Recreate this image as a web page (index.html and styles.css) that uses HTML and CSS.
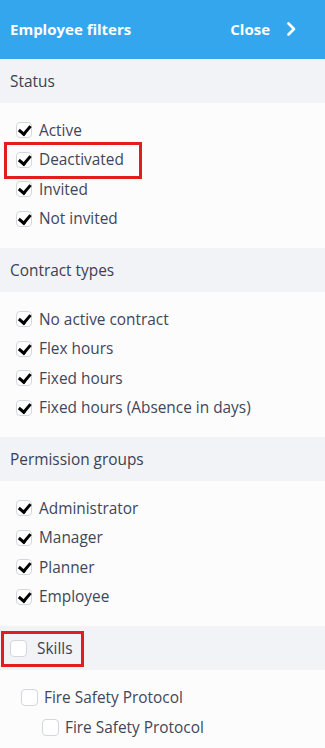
FILE: index.html
```html
<!DOCTYPE html>
<html lang="en">
  <head>
    <meta charset="UTF-8" />
    <meta name="viewport" content="width=device-width, initial-scale=1.0" />
    <title>Employee filters</title>
    <link rel="stylesheet" href="styles.css">
  </head>
  <body>
    <div class="panel">
      <div class="panel-header">
        <span class="panel-title">Employee filters</span>
        <span class="close">
          Close
          <svg width="10" height="14" viewBox="0 0 10 14">
            <polyline points="2.5,1.5 8,7 2.5,12.5" fill="none" stroke="#fff" stroke-width="2.6" stroke-linecap="round" stroke-linejoin="round" />
          </svg>
        </span>
      </div>

      <div class="section-head">Status</div>
      <div class="options">
        <label class="option"><span class="box checked"></span>Active</label>
        <label class="option"><span class="marked"><span class="box checked"></span>Deactivated</span></label>
        <label class="option"><span class="box checked"></span>Invited</label>
        <label class="option"><span class="box checked"></span>Not invited</label>
      </div>

      <div class="section-head">Contract types</div>
      <div class="options">
        <label class="option"><span class="box checked"></span>No active contract</label>
        <label class="option"><span class="box checked"></span>Flex hours</label>
        <label class="option"><span class="box checked"></span>Fixed hours</label>
        <label class="option"><span class="box checked"></span>Fixed hours (Absence in days)</label>
      </div>

      <div class="section-head">Permission groups</div>
      <div class="options">
        <label class="option"><span class="box checked"></span>Administrator</label>
        <label class="option"><span class="box checked"></span>Manager</label>
        <label class="option"><span class="box checked"></span>Planner</label>
        <label class="option"><span class="box checked"></span>Employee</label>
      </div>

      <div class="section-head skills-head">
        <span class="box big"></span>Skills
      </div>
      <div class="options skills">
        <label class="option level-1"><span class="box big"></span>Fire Safety Protocol</label>
        <label class="option level-2"><span class="box big"></span>Fire Safety Protocol</label>
      </div>
    </div>
  </body>
</html>
```

FILE: styles.css
```css
/* General */
body {
  margin: 0;
  font-family: "Open Sans", "Noto Sans", sans-serif;
  color: #3c4152;
  background: #fcfcfc;
  overflow: hidden;
}

.panel {
  width: 325px;
  height: 748px;
  background: #fcfcfc;
}

/* Header */
.panel-header {
  height: 57px;
  background: #33a6ed;
  color: #fff;
  display: flex;
  align-items: center;
  justify-content: space-between;
  padding: 0 29px 2px 10px;
  font-size: 15px;
  font-weight: bold;
}

.close {
  display: flex;
  align-items: center;
  gap: 16px;
}

/* Sections */
.section-head {
  height: 44px;
  display: flex;
  align-items: center;
  padding-left: 10px;
  background: #f2f3f7;
  font-size: 15.4px;
}

.options {
  padding: 12.5px 0 14.5px 16px;
}

.option {
  height: 29.5px;
  display: flex;
  align-items: center;
  font-size: 15.4px;
  color: #41465a;
}

/* Checkboxes */
.box {
  width: 14px;
  height: 14px;
  border: 1px solid #d3d6dd;
  border-radius: 4px;
  background: #fff;
  margin-right: 7px;
  flex-shrink: 0;
  position: relative;
}

.box.checked::after {
  content: "";
  position: absolute;
  left: 4px;
  top: 0px;
  width: 4.5px;
  height: 8.5px;
  border: solid #000;
  border-width: 0 3px 3px 0;
  transform: rotate(40deg);
}

.box.big {
  width: 15px;
  height: 15px;
  margin-right: 6px;
}

.skills-head .box {
  margin-right: 10px;
}

/* Skills tree */
.options.skills {
  padding: 13px 0 0 0;
}

.level-1 {
  padding-left: 21px;
}

.level-2 {
  padding-left: 42px;
}

/* Highlight marks */
.marked {
  position: relative;
  display: flex;
  align-items: center;
}

.marked::before {
  content: "";
  position: absolute;
  left: -12px;
  top: -7px;
  width: 132px;
  height: 31px;
  border: 3px solid #e11d22;
}

.skills-head {
  position: relative;
}

.skills-head::before {
  content: "";
  position: absolute;
  left: 1px;
  top: 5px;
  width: 77px;
  height: 30px;
  border: 3px solid #e11d22;
}
```
